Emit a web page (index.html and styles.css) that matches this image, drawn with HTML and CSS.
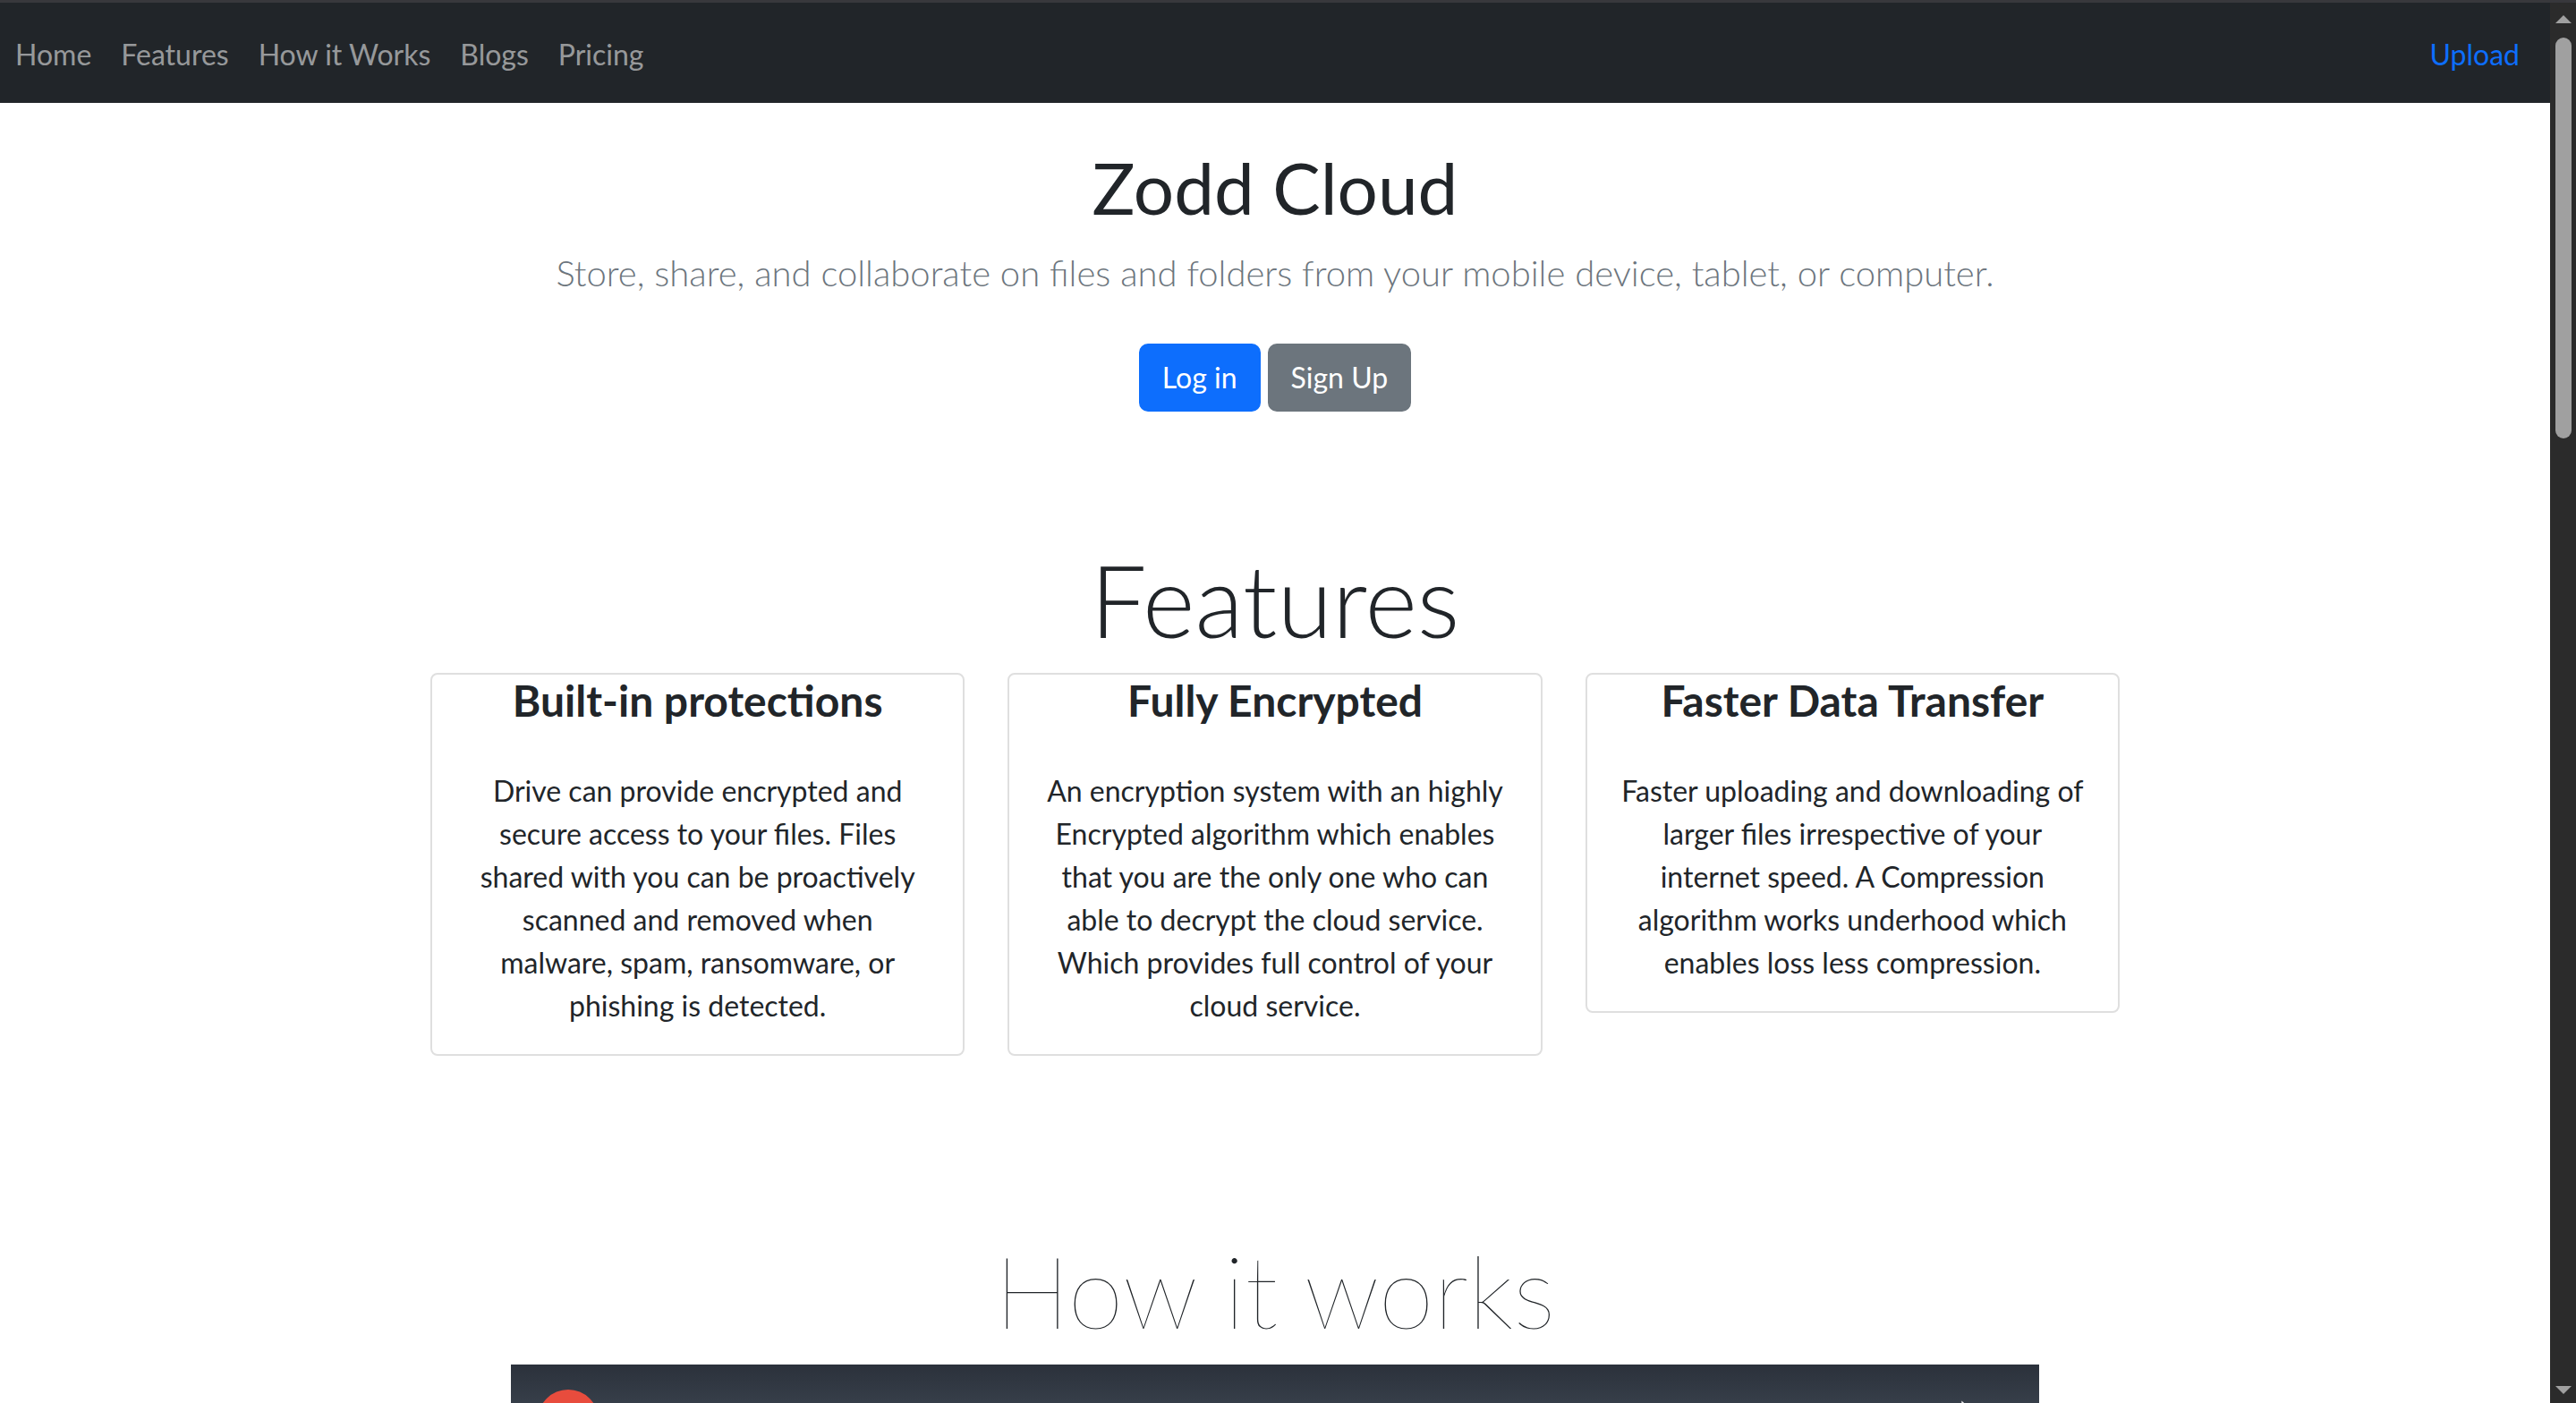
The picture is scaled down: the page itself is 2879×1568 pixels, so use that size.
FILE: index.html
```html
<!DOCTYPE html>
<html lang="en">
<head>
<meta charset="utf-8">
<title>Zodd Cloud</title>
<link rel="stylesheet" href="styles.css">
</head>
<body>
<div class="window">
  <div class="page">
    <nav class="navbar">
      <ul class="nav-list">
        <li><a class="nav-link" href="#">Home</a></li>
        <li><a class="nav-link" href="#">Features</a></li>
        <li><a class="nav-link" href="#">How it Works</a></li>
        <li><a class="nav-link" href="#">Blogs</a></li>
        <li><a class="nav-link" href="#">Pricing</a></li>
      </ul>
      <a class="nav-upload" href="#">Upload</a>
    </nav>

    <header class="hero">
      <h1 class="hero-title">Zodd Cloud</h1>
      <p class="hero-lead">Store, share, and collaborate on files and folders from your mobile device, tablet, or computer.</p>
      <div class="hero-actions">
        <a class="btn btn-primary" href="#">Log in</a>
        <a class="btn btn-secondary" href="#">Sign Up</a>
      </div>
    </header>

    <section class="features">
      <h2 class="display-heading">Features</h2>
      <div class="card-grid">
        <div class="card">
          <h4 class="card-title">Built-in protections</h4>
          <p class="card-text">Drive can provide encrypted and<br>secure access to your files. Files<br>shared with you can be proactively<br>scanned and removed when<br>malware, spam, ransomware, or<br>phishing is detected.</p>
        </div>
        <div class="card">
          <h4 class="card-title">Fully Encrypted</h4>
          <p class="card-text">An encryption system with an highly<br>Encrypted algorithm which enables<br>that you are the only one who can<br>able to decrypt the cloud service.<br>Which provides full control of your<br>cloud service.</p>
        </div>
        <div class="card">
          <h4 class="card-title">Faster Data Transfer</h4>
          <p class="card-text">Faster uploading and downloading of<br>larger files irrespective of your<br>internet speed. A Compression<br>algorithm works underhood which<br>enables loss less compression.</p>
        </div>
      </div>
    </section>

    <section class="how">
      <h2 class="display-heading thin">How it works</h2>
      <div class="video">
        <div class="video-top">
          <span class="avatar"></span>
          <svg class="share-icon" width="40" height="40" viewBox="0 0 36 36" aria-hidden="true"><path d="M21 4 L33 15 L21 26 L21 19 C13 19 7 22 3 30 C5 20 10 13 21 12 Z" fill="#f1f1f1"/></svg>
        </div>
      </div>
    </section>
  </div>

  <div class="scrollbar">
    <span class="arrow-up"></span>
    <span class="thumb"></span>
    <span class="track-fill"></span>
    <span class="arrow-down"></span>
  </div>
</div>
</body>
</html>
```

FILE: styles.css
```css
* { box-sizing: border-box; }

html, body {
  margin: 0;
  height: 100%;
  overflow: hidden;
}

body {
  font-family: "Lato", "Noto Sans", "DejaVu Sans", sans-serif;
  color: #212529;
  background: #ffffff;
  font-size: 32px;
  line-height: 1.5;
}

.window {
  display: flex;
  height: 100vh;
  border-top: 3px solid #38383c;
}

.page {
  flex: 1;
  overflow: hidden;
  background: #fff;
}

/* navbar */
.navbar {
  display: flex;
  align-items: center;
  justify-content: space-between;
  height: 112px;
  background: #212529;
  padding: 3px 18px 0 1px;
}

.nav-list {
  display: flex;
  list-style: none;
  margin: 0;
  padding: 0;
}

.nav-link {
  display: block;
  padding: 16px 17px 16px 16px;
  color: rgba(255, 255, 255, 0.55);
  text-decoration: none;
}

.nav-upload {
  padding: 16px 16px;
  color: #0d6efd;
  text-decoration: none;
}

/* hero */
.hero {
  text-align: center;
  padding-top: 46px;
}

.hero-title {
  margin: 0;
  font-size: 80px;
  font-weight: 400;
  line-height: 1.2;
}

.hero-lead {
  margin: 18px 0 0;
  font-size: 40px;
  font-weight: 300;
  line-height: 1.5;
  color: #6c757d;
}

.hero-actions {
  display: flex;
  justify-content: center;
  gap: 8px;
  margin-top: 49px;
}

.btn {
  display: inline-block;
  padding: 12px 24px;
  border: 2px solid transparent;
  border-radius: 10px;
  font-size: 32px;
  line-height: 48px;
  color: #fff;
  text-decoration: none;
}

.btn-primary { background: #0d6efd; border-color: #0d6efd; }
.btn-secondary { background: #6c757d; border-color: #6c757d; }

/* features */
.features {
  text-align: center;
  margin-top: 143px;
}

.display-heading {
  margin: 0;
  font-size: 112px;
  font-weight: 300;
  line-height: 1.2;
}

.display-heading.thin {
  font-weight: 200;
}

.card-grid {
  display: grid;
  grid-template-columns: repeat(3, 1fr);
  gap: 48px;
  width: 1888px;
  margin: 15px auto 0;
  align-items: start;
}

.card {
  border: 2px solid #dfdfdf;
  border-radius: 8px;
  padding: 0 20px 30px;
}

.card-title {
  margin: 0 0 48px;
  font-size: 48px;
  font-weight: 700;
  line-height: 1.2;
}

.card-text {
  margin: 0;
  font-size: 32px;
  line-height: 48px;
}

/* how it works */
.how {
  text-align: center;
  margin-top: 195px;
}

.video {
  width: 1708px;
  height: 960px;
  margin: 16px auto 0;
  background: linear-gradient(180deg, #2b313b 0%, #4a5561 12%, #56616d 30%, #3c4550 100%);
  position: relative;
}

.video-top {
  display: flex;
  justify-content: space-between;
  align-items: flex-start;
  padding: 28px 70px 0 30px;
}

.avatar {
  width: 68px;
  height: 68px;
  border-radius: 50%;
  background: #e84c3d;
}

.share-icon {
  margin-top: 8px;
}

/* fake scrollbar */
.scrollbar {
  width: 29px;
  flex: none;
  background: #2b2b2b;
  display: flex;
  flex-direction: column;
  align-items: center;
  padding: 14px 0 10px;
}

.arrow-up, .arrow-down {
  width: 0;
  height: 0;
  border-left: 9px solid transparent;
  border-right: 9px solid transparent;
}

.arrow-up { border-bottom: 9px solid #a0a0a0; }
.arrow-down { border-top: 9px solid #a0a0a0; }

.thumb {
  width: 18px;
  height: 448px;
  margin-top: 16px;
  border-radius: 9px;
  background: #a0a0a0;
}

.track-fill { flex: 1; }
```
